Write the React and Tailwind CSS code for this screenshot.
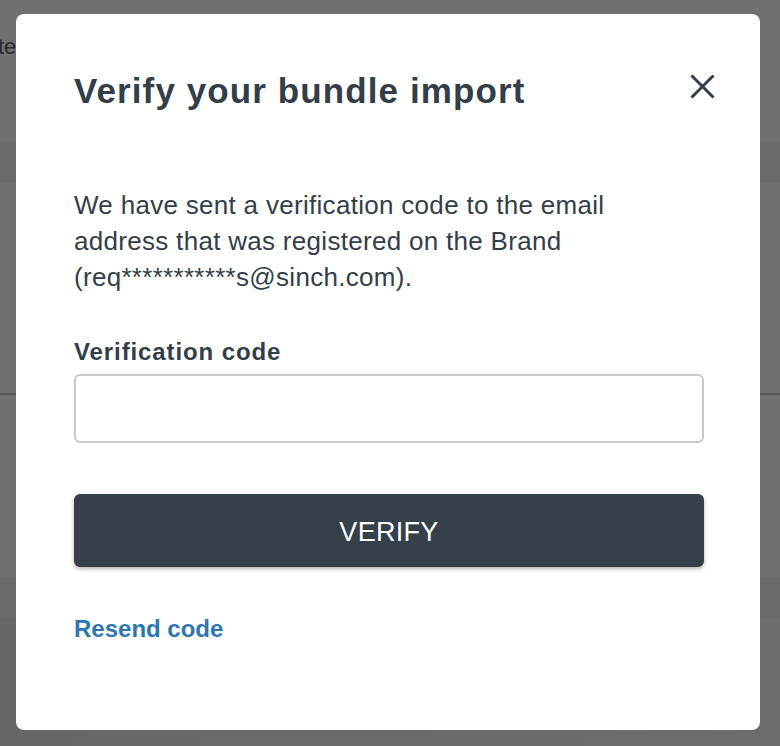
import React from 'react';

const font = { fontFamily: '"Liberation Sans", Arial, sans-serif' };

const App = () => {
  return (
    <div className="relative w-[780px] h-[746px] overflow-hidden bg-[#707070]" style={font}>
      {/* page behind the overlay */}
      <div className="flex flex-col">
        <div className="h-[142px] pt-[30px]">
          <span className="block -ml-[2px] text-[22px] text-[#2a2a2a]">te</span>
        </div>
        <div className="h-[41px] bg-[#6a6a6a]"></div>
        <div className="h-[210px]"></div>
        <div className="h-[2px] bg-[#585858]"></div>
        <div className="h-[183px]"></div>
        <div className="h-[40px] bg-[#6a6a6a]"></div>
        <div className="h-[128px] bg-gradient-to-r from-[#676767] to-[#6d6d6d]"></div>
      </div>

      {/* modal */}
      <div className="absolute left-[16px] top-[14px] w-[744px] h-[716px] bg-white rounded-[8px] pl-[58px] pr-[56px] pt-[55px]">
        <div className="flex items-start justify-between">
          <h1 className="text-[35px] font-bold text-[#333e48] leading-[44px] tracking-[1.1px]">Verify your bundle import</h1>
          <button className="mt-[5px] -mr-[11px] w-[25px] h-[25px] flex items-center justify-center text-[#333e48]">
            <svg width="25" height="25" viewBox="0 0 25 25" fill="none" stroke="currentColor" strokeWidth="3" strokeLinecap="butt">
              <line x1="1.5" y1="1.5" x2="23.5" y2="23.5" />
              <line x1="23.5" y1="1.5" x2="1.5" y2="23.5" />
            </svg>
          </button>
        </div>
        <p className="mt-[74px] max-w-[600px] text-[26px] leading-[36px] tracking-[0.3px] text-[#333e48]">
          We have sent a verification code to the email address that was registered on the Brand (req***********s@sinch.com).
        </p>
        <label className="block mt-[41px] text-[24px] font-bold leading-[32px] tracking-[0.9px] text-[#333e48]">Verification code</label>
        <input
          type="text"
          className="block mt-[6px] w-full h-[69px] border-2 border-[#c9c9c9] rounded-[6px] px-3 text-[24px] outline-none"
        />
        <button className="mt-[51px] w-full h-[73px] pt-[3px] bg-[#36404a] rounded-[6px] text-white text-[27px] tracking-[0.3px] shadow-[0_2px_4px_rgba(0,0,0,0.3)]">
          VERIFY
        </button>
        <a className="block mt-[46px] text-[24px] font-bold text-[#2e76b0] leading-[32px]">Resend code</a>
      </div>
    </div>
  );
};

export default App;
